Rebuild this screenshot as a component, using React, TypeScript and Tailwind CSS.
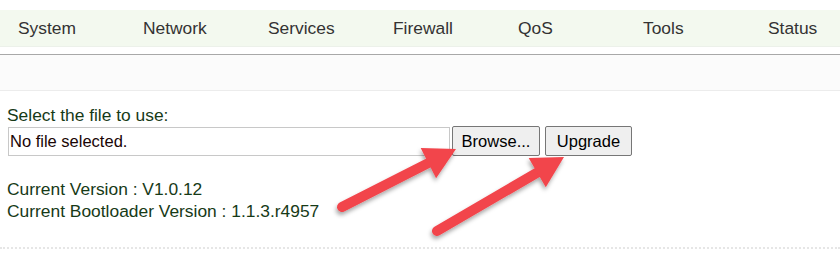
import React from 'react'

const navItems = ['System', 'Network', 'Services', 'Firewall', 'QoS', 'Tools', 'Status']

// red annotation arrow: round-capped shaft + triangular head
function Arrow({ from, to }: { from: [number, number]; to: [number, number] }) {
  const dx = to[0] - from[0]
  const dy = to[1] - from[1]
  const len = Math.hypot(dx, dy)
  const ux = dx / len
  const uy = dy / len
  const head = 31
  const half = 17
  const bx = to[0] - ux * head
  const by = to[1] - uy * head
  const nx = -uy
  const ny = ux
  const pts = `${to[0]},${to[1]} ${bx + nx * half},${by + ny * half} ${bx - nx * half},${by - ny * half}`
  return (
    <g filter="url(#shadow)">
      <line x1={from[0]} y1={from[1]} x2={bx + ux * 2} y2={by + uy * 2} stroke="#f2444b" strokeWidth={10} strokeLinecap="round" />
      <polygon points={pts} fill="#f2444b" strokeLinejoin="round" />
    </g>
  )
}

export default function App() {
  return (
    <div className="relative w-[840px] h-[273px] bg-white overflow-hidden font-['Liberation_Sans',Arial,sans-serif]">
      {/* Top nav */}
      <div className="pt-[10px]">
        <div className="h-[37px] pt-[2px] bg-[#f3f9ef] border-b border-[#ecf1ea] flex items-center overflow-hidden">
          {navItems.map((item) => (
            <div key={item} className="w-[125px] flex-shrink-0 pl-[18px] text-[17.4px] text-[#333] leading-none">
              {item}
            </div>
          ))}
        </div>
      </div>

      {/* Sub bar */}
      <div className="mt-[7px] h-[37px] bg-[#fbfbfb] border-t border-[#a8a8a8] border-b border-b-[#ececec]" />

      {/* Content */}
      <div className="px-[7px] pt-[14px] text-[17.4px] text-[#173a17]">
        <div className="leading-[21px]">Select the file to use:</div>
        <div className="flex items-start gap-[2px]">
          <div className="mt-[1px] ml-[1px] w-[442px] h-[29px] border border-[#c8c8c8] flex items-center pl-[1px] text-[16.5px] text-[#1a0505]">
            No file selected.
          </div>
          <button className="w-[88px] h-[30px] bg-[#efefef] border border-[#767676] rounded-[2px] text-black text-[16.5px]">
            Browse...
          </button>
          <button className="ml-[3px] w-[87px] h-[30px] bg-[#efefef] border border-[#767676] rounded-[2px] text-black text-[16.5px]">
            Upgrade
          </button>
        </div>
        <div className="mt-[22px] leading-[22px]">
          <div>Current Version : V1.0.12</div>
          <div>Current Bootloader Version : 1.1.3.r4957</div>
        </div>
      </div>
      <div className="mt-[25px] border-t-2 border-dotted border-[#e6e6e6]" />

      {/* annotation arrows */}
      <svg className="absolute left-0 top-0 pointer-events-none" width={840} height={273}>
        <defs>
          <filter id="shadow" x="-20%" y="-20%" width="140%" height="140%">
            <feDropShadow dx="-1" dy="3" stdDeviation="2" floodColor="#000" floodOpacity="0.35" />
          </filter>
        </defs>
        <Arrow from={[342, 207]} to={[456, 149]} />
        <Arrow from={[437, 231]} to={[564, 157]} />
      </svg>
    </div>
  )
}
